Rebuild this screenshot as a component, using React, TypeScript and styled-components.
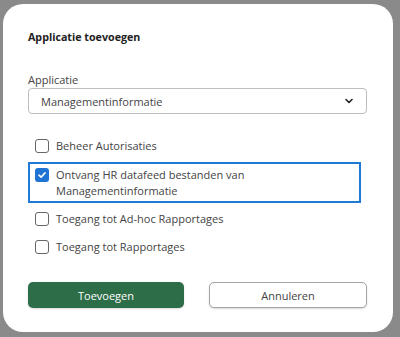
import React, { useState } from 'react';
import styled, { createGlobalStyle } from 'styled-components';

const GlobalStyle = createGlobalStyle`
  html, body {
    margin: 0;
    padding: 0;
    background: #8a8a8a;
  }
  body {
    font-family: "Open Sans", "Noto Sans", sans-serif;
    color: #333;
  }
`;

const Backdrop = styled.div`
  width: 400px;
  height: 337px;
  padding: 4px 7px 5px 3px;
  box-sizing: border-box;
`;

const Dialog = styled.div`
  background: #fff;
  border-radius: 20px;
  height: 100%;
  box-sizing: border-box;
  padding: 26px 26px 0 25px;
  display: flex;
  flex-direction: column;
`;

const Title = styled.h2`
  margin: 0;
  font-size: 10.7px;
  font-weight: 700;
  color: #222;
  line-height: 15px;
`;

const Label = styled.label`
  margin-top: 27px;
  font-size: 11px;
  line-height: 16px;
  color: #444;
`;

const Select = styled.div`
  margin-top: 0;
  height: 26px;
  border: 1px solid #bdbdbd;
  border-radius: 4px;
  display: flex;
  align-items: center;
  justify-content: space-between;
  padding: 0 12px 0 12px;
  font-size: 11px;
  color: #444;
  box-sizing: border-box;
`;

const Options = styled.div`
  margin-top: 18px;
  display: flex;
  flex-direction: column;
`;

const Option = styled.label<{ $active?: boolean }>`
  display: flex;
  align-items: flex-start;
  gap: 7px;
  margin: ${(p) => (p.$active ? '2px 6px 2px 0' : '0 6px 0 0')};
  padding: ${(p) => (p.$active ? '3px 6px 2px 5px' : '6px 7px')};
  border: ${(p) => (p.$active ? '2px solid #1f7ad6' : '0')};
  font-size: 11px;
  line-height: 16px;
  color: #444;
  cursor: pointer;
`;

const Box = styled.span<{ $checked?: boolean }>`
  flex: 0 0 auto;
  width: 14px;
  height: 14px;
  margin-top: 1px;
  border-radius: 3px;
  box-sizing: border-box;
  border: ${(p) => (p.$checked ? '0' : '1px solid #666')};
  background: ${(p) => (p.$checked ? '#1f73d3' : '#fff')};
  display: flex;
  align-items: center;
  justify-content: center;
`;

const Actions = styled.div`
  margin-top: 21px;
  display: flex;
  justify-content: space-between;
  gap: 25px;
`;

const Button = styled.button<{ $primary?: boolean }>`
  flex: 1;
  height: 26px;
  border-radius: 5px;
  font-family: inherit;
  font-size: 11px;
  cursor: pointer;
  background: ${(p) => (p.$primary ? '#2d6e48' : '#fff')};
  color: ${(p) => (p.$primary ? '#fff' : '#444')};
  border: ${(p) => (p.$primary ? '0' : '1px solid #a5a5a5')};
  box-shadow: 0 1px 2px rgba(0, 0, 0, 0.15);
`;

const items = [
  'Beheer Autorisaties',
  'Ontvang HR datafeed bestanden van Managementinformatie',
  'Toegang tot Ad-hoc Rapportages',
  'Toegang tot Rapportages',
];

const Check = () => (
  <svg width="10" height="10" viewBox="0 0 10 10">
    <path d="M2 5.2 L4.1 7.2 L8 2.9" fill="none" stroke="#fff" strokeWidth="1.6" strokeLinecap="round" strokeLinejoin="round" />
  </svg>
);

const Chevron = () => (
  <svg width="10" height="10" viewBox="0 0 10 10">
    <path d="M2 3.5 L5 6.5 L8 3.5" fill="none" stroke="#222" strokeWidth="1.6" strokeLinecap="round" strokeLinejoin="round" />
  </svg>
);

export default function App() {
  const [checked, setChecked] = useState<number[]>([1]);
  const toggle = (i: number) =>
    setChecked((c) => (c.includes(i) ? c.filter((x) => x !== i) : [...c, i]));

  return (
    <Backdrop>
      <GlobalStyle />
      <Dialog>
        <Title>Applicatie toevoegen</Title>
        <Label>Applicatie</Label>
        <Select>
          <span>Managementinformatie</span>
          <Chevron />
        </Select>
        <Options>
          {items.map((text, i) => (
            <Option key={text} $active={i === 1} onClick={() => toggle(i)}>
              <Box $checked={checked.includes(i)}>{checked.includes(i) && <Check />}</Box>
              <span>{i === 1 ? <>Ontvang HR datafeed bestanden van<br />Managementinformatie</> : text}</span>
            </Option>
          ))}
        </Options>
        <Actions>
          <Button $primary>Toevoegen</Button>
          <Button>Annuleren</Button>
        </Actions>
      </Dialog>
    </Backdrop>
  );
}
